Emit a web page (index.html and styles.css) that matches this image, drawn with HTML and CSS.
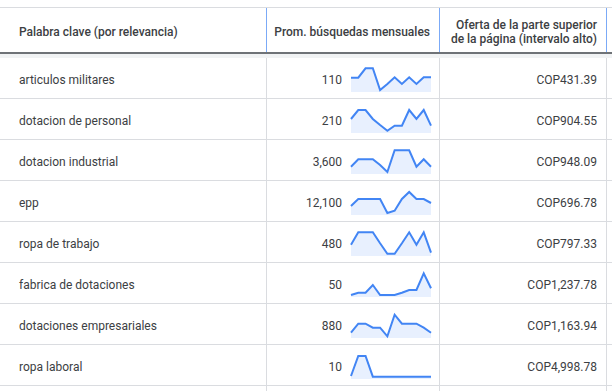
FILE: index.html
```html
<!DOCTYPE html>
<html lang="es">
<head>
<meta charset="utf-8">
<title>Ideas de palabras clave</title>
<link rel="stylesheet" href="styles.css">
</head>
<body>
<div class="table">
  <div class="row head">
    <div class="cell c1">Palabra clave (por relevancia)</div>
    <div class="cell c2">Prom. búsquedas mensuales</div>
    <div class="cell c3">Oferta de la parte superior<br>de la página (intervalo alto)</div>
    <div class="cell c4"></div>
  </div>
  <div class="band"></div>

  <div class="row">
    <div class="cell c1">articulos militares</div>
    <div class="cell c2"><span class="num">110</span>
      <svg class="spark" viewBox="0 0 80 25"><polygon class="area" points="0,10.7 7.27,10.7 14.55,1.3 21.82,1.3 29.09,23 36.36,17 43.64,10.3 50.91,17 58.18,10.3 65.45,17 72.73,10.3 80,10.3 80,25 0,25"/><polyline class="line" points="0,10.7 7.27,10.7 14.55,1.3 21.82,1.3 29.09,23 36.36,17 43.64,10.3 50.91,17 58.18,10.3 65.45,17 72.73,10.3 80,10.3"/></svg>
    </div>
    <div class="cell c3">COP431.39</div>
    <div class="cell c4"></div>
  </div>

  <div class="row">
    <div class="cell c1">dotacion de personal</div>
    <div class="cell c2"><span class="num">210</span>
      <svg class="spark" viewBox="0 0 80 25"><polygon class="area" points="0,11 7.27,2 14.55,2 21.82,11 29.09,17 36.36,22.7 43.64,17.7 50.91,17.7 58.18,2 65.45,11 72.73,2 80,17.7 80,25 0,25"/><polyline class="line" points="0,11 7.27,2 14.55,2 21.82,11 29.09,17 36.36,22.7 43.64,17.7 50.91,17.7 58.18,2 65.45,11 72.73,2 80,17.7"/></svg>
    </div>
    <div class="cell c3">COP904.55</div>
    <div class="cell c4"></div>
  </div>

  <div class="row">
    <div class="cell c1">dotacion industrial</div>
    <div class="cell c2"><span class="num">3,600</span>
      <svg class="spark" viewBox="0 0 80 25"><polygon class="area" points="0,17.7 7.27,10.3 14.55,10.3 21.82,10.3 29.09,16 36.36,23 43.64,1.3 50.91,1.3 58.18,1.3 65.45,17.7 72.73,10.3 80,17.7 80,25 0,25"/><polyline class="line" points="0,17.7 7.27,10.3 14.55,10.3 21.82,10.3 29.09,16 36.36,23 43.64,1.3 50.91,1.3 58.18,1.3 65.45,17.7 72.73,10.3 80,17.7"/></svg>
    </div>
    <div class="cell c3">COP948.09</div>
    <div class="cell c4"></div>
  </div>

  <div class="row">
    <div class="cell c1">epp</div>
    <div class="cell c2"><span class="num">12,100</span>
      <svg class="spark" viewBox="0 0 80 25"><polygon class="area" points="0,16 7.27,9 14.55,9 21.82,9 29.09,9 36.36,23 43.64,20.7 50.91,9 58.18,2 65.45,9 72.73,9 80,13 80,25 0,25"/><polyline class="line" points="0,16 7.27,9 14.55,9 21.82,9 29.09,9 36.36,23 43.64,20.7 50.91,9 58.18,2 65.45,9 72.73,9 80,13"/></svg>
    </div>
    <div class="cell c3">COP696.78</div>
    <div class="cell c4"></div>
  </div>

  <div class="row">
    <div class="cell c1">ropa de trabajo</div>
    <div class="cell c2"><span class="num">480</span>
      <svg class="spark" viewBox="0 0 80 25"><polygon class="area" points="0,13.7 7.27,1.3 14.55,1.3 21.82,1.3 29.09,12.3 36.36,22.7 43.64,22.7 50.91,12.3 58.18,1.3 65.45,13.7 72.73,1.3 80,21.7 80,25 0,25"/><polyline class="line" points="0,13.7 7.27,1.3 14.55,1.3 21.82,1.3 29.09,12.3 36.36,22.7 43.64,22.7 50.91,12.3 58.18,1.3 65.45,13.7 72.73,1.3 80,21.7"/></svg>
    </div>
    <div class="cell c3">COP797.33</div>
    <div class="cell c4"></div>
  </div>

  <div class="row">
    <div class="cell c1">fabrica de dotaciones</div>
    <div class="cell c2"><span class="num">50</span>
      <svg class="spark" viewBox="0 0 80 25"><polygon class="area" points="0,23 7.27,20.7 14.55,20.7 21.82,13 29.09,23 36.36,23 43.64,23 50.91,20.7 58.18,18 65.45,18 72.73,1.3 80,16.3 80,25 0,25"/><polyline class="line" points="0,23 7.27,20.7 14.55,20.7 21.82,13 29.09,23 36.36,23 43.64,23 50.91,20.7 58.18,18 65.45,18 72.73,1.3 80,16.3"/></svg>
    </div>
    <div class="cell c3">COP1,237.78</div>
    <div class="cell c4"></div>
  </div>

  <div class="row">
    <div class="cell c1">dotaciones empresariales</div>
    <div class="cell c2"><span class="num">880</span>
      <svg class="spark" viewBox="0 0 80 25"><polygon class="area" points="0,19.7 7.27,10.7 14.55,10.7 21.82,14.7 29.09,14.7 36.36,23.3 43.64,1.7 50.91,10.7 58.18,10.7 65.45,10.7 72.73,14.7 80,19.7 80,25 0,25"/><polyline class="line" points="0,19.7 7.27,10.7 14.55,10.7 21.82,14.7 29.09,14.7 36.36,23.3 43.64,1.7 50.91,10.7 58.18,10.7 65.45,10.7 72.73,14.7 80,19.7"/></svg>
    </div>
    <div class="cell c3">COP1,163.94</div>
    <div class="cell c4"></div>
  </div>

  <div class="row">
    <div class="cell c1">ropa laboral</div>
    <div class="cell c2"><span class="num">10</span>
      <svg class="spark" viewBox="0 0 80 25"><polygon class="area" points="0,22 7.27,2 14.55,2 21.82,22.7 29.09,22.7 36.36,22.7 43.64,22.7 50.91,22.7 58.18,22.7 65.45,22.7 72.73,22.7 80,22.7 80,25 0,25"/><polyline class="line" points="0,22 7.27,2 14.55,2 21.82,22.7 29.09,22.7 36.36,22.7 43.64,22.7 50.91,22.7 58.18,22.7 65.45,22.7 72.73,22.7 80,22.7"/></svg>
    </div>
    <div class="cell c3">COP4,998.78</div>
    <div class="cell c4"></div>
  </div>

  <div class="row">
    <div class="cell c1"></div>
    <div class="cell c2"></div>
    <div class="cell c3"></div>
    <div class="cell c4"></div>
  </div>
</div>
</body>
</html>
```

FILE: styles.css
```css
html, body {
  margin: 0;
  padding: 0;
  background: #ffffff;
  overflow: hidden;
}

body {
  font-family: Roboto, "Liberation Sans", Arial, sans-serif;
  color: #3c4043;
  font-size: 12px;
}

.table {
  margin-top: 7px;
  width: 720px;
  border-top: 1px solid #dadce0;
}

.row {
  display: grid;
  grid-template-columns: 267px 173px 167px 1fr;
  height: 41px;
  border-bottom: 1px solid #dadce0;
  box-sizing: border-box;
}

.cell {
  display: flex;
  align-items: center;
  border-right: 1px solid #dadce0;
  box-sizing: border-box;
  min-width: 0;
}

.c1 {
  padding-left: 19px;
  padding-top: 3px;
}

.c2 {
  justify-content: flex-end;
  padding-right: 8px;
}

.c3 {
  justify-content: flex-end;
  padding-right: 9px;
  padding-top: 3px;
  text-align: right;
}

.c4 {
  border-right: none;
}

.head {
  height: 46px;
  border-bottom: 2px solid #6f7377;
}

.head .cell {
  border-right-color: #7baaf7;
  font-weight: 500;
  color: #3c4043;
  line-height: 14px;
  padding-top: 3px;
}

.head .c2 {
  padding-right: 9px;
}

.head .c4 {
  border-right: none;
}

.band {
  height: 4px;
  background: #f1f3f4;
}

.num {
  margin-right: 9px;
  margin-top: 3px;
}

.spark {
  width: 80px;
  height: 25px;
  margin-top: 3px;
  overflow: visible;
  flex: none;
}

.spark .area {
  fill: #e8f0fe;
  stroke: none;
}

.spark .line {
  fill: none;
  stroke: #4285f4;
  stroke-width: 2;
  stroke-linejoin: miter;
}
```
